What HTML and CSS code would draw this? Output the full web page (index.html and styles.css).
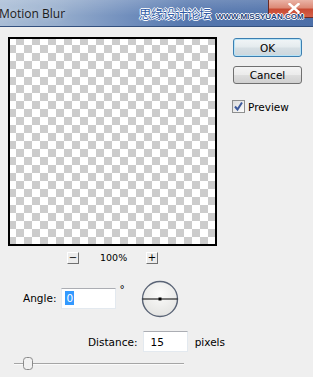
FILE: index.html
```html
<!DOCTYPE html>
<html>
<head>
<meta charset="utf-8">
<link rel="stylesheet" href="styles.css">
</head>
<body>
<div class="window">
  <div class="titlebar">
    <span class="title">Motion Blur</span>
    <span class="close">
      <svg width="12" height="10" viewBox="0 0 12 10"><path d="M1.5 1 L10.5 9 M10.5 1 L1.5 9" stroke="#fff" stroke-width="2.4" stroke-linecap="square"/></svg>
    </span>
    <span class="wm-cn">思缘设计论坛</span>
    <span class="wm-en">WWW.MISSYUAN.COM</span>
  </div>
  <div class="main">
    <div class="left">
      <div class="preview"><div class="checker"></div></div>
      <div class="zoomrow">
        <span class="zbtn">−</span>
        <span class="zpct">100%</span>
        <span class="zbtn">+</span>
      </div>
      <div class="angle-row">
        <span class="lbl">Angle:</span>
        <span class="field angle-field"><span class="sel">0</span></span>
        <span class="deg">°</span>
        <svg class="dial" width="38" height="38" viewBox="0 0 38 38">
          <defs>
            <radialGradient id="dg" cx="50%" cy="35%" r="65%">
              <stop offset="0" stop-color="#fbfbfa"/>
              <stop offset="1" stop-color="#e4e4e2"/>
            </radialGradient>
          </defs>
          <circle cx="19" cy="19" r="17.5" fill="url(#dg)" stroke="#5a6476" stroke-width="1.4"/>
          <line x1="1.5" y1="19" x2="36.5" y2="19" stroke="#000" stroke-width="1.2"/>
          <rect x="17.5" y="17.5" width="3" height="3" fill="#000"/>
        </svg>
      </div>
      <div class="dist-row">
        <span class="lbl">Distance:</span>
        <span class="field dist-field">15</span>
        <span class="unit">pixels</span>
      </div>
      <div class="slider">
        <div class="track"></div>
        <svg class="thumb" width="10" height="13" viewBox="0 0 10 13"><rect x="0.5" y="0.5" width="9" height="12" rx="3" fill="#f1f1f1" stroke="#8a8a8a"/></svg>
      </div>
    </div>
    <div class="right">
      <button class="btn ok">OK</button>
      <button class="btn cancel">Cancel</button>
      <label class="chk">
        <span class="box"><svg width="11" height="11" viewBox="0 0 11 11"><path d="M2 5.5 L4.5 8.5 L9 1.5" fill="none" stroke="#3d5a9c" stroke-width="2"/></svg></span>
        <span class="chk-text">Preview</span>
      </label>
    </div>
  </div>
</div>
</body>
</html>
```
FILE: styles.css
```css
html, body {
  margin: 0;
  padding: 0;
}
body {
  width: 313px;
  height: 377px;
  overflow: hidden;
  background: #efefef;
  font-family: "DejaVu Sans", Tahoma, sans-serif;
  font-size: 10.5px;
  color: #000;
}
.window {
  width: 313px;
  height: 377px;
  display: flex;
  flex-direction: column;
}
.titlebar {
  position: relative;
  height: 26px;
  flex: none;
  display: flex;
  align-items: center;
  background:
    linear-gradient(180deg, rgba(255,255,255,0.18) 0%, rgba(255,255,255,0) 60%),
    linear-gradient(90deg, #a9bdd6 0%, #97aecd 18%, #6f8dbc 42%, #5577ae 60%, #4d6fa8 100%);
  border-bottom: 1px solid #33507e;
}
.title {
  font-family: "Open Sans", "Noto Sans", sans-serif;
  font-size: 12px;
  color: #1b1b1b;
  margin-left: -1px;
  margin-top: 1px;
  text-shadow: 0 0 6px rgba(255,255,255,0.6);
}
.wm-cn {
  position: absolute;
  left: 139px;
  top: 6px;
  font-family: "Noto Sans CJK SC", sans-serif;
  font-size: 12.5px;
  line-height: 16px;
  color: #2f5aa5;
  text-shadow: 1px 0 0 #fff, -1px 0 0 #fff, 0 1px 0 #fff, 0 -1px 0 #fff;
  letter-spacing: -0.5px;
}
.wm-en {
  position: absolute;
  left: 216px;
  top: 12px;
  font-family: "Liberation Sans", sans-serif;
  font-weight: bold;
  font-size: 8px;
  line-height: 9px;
  color: #23427a;
  text-shadow: 1px 0 0 #fff, -1px 0 0 #fff, 0 1px 0 #fff, 0 -1px 0 #fff;
}
.close {
  position: absolute;
  left: 268px;
  top: -1px;
  width: 50px;
  height: 19px;
  border: 1px solid #6a2a24;
  border-radius: 0 0 4px 4px;
  background: linear-gradient(180deg, #eab3a6 0%, #dc8a77 45%, #c94a33 55%, #d4614a 100%);
  display: flex;
  align-items: center;
  padding-left: 19px;
  box-sizing: border-box;
}
.close svg { margin-top: -1px; }
.main {
  display: flex;
  flex: 1;
}
.left {
  width: 225px;
  padding: 10px 0 0 8px;
  box-sizing: border-box;
  display: flex;
  flex-direction: column;
}
.preview {
  width: 209px;
  height: 209px;
  border: 2px solid #000;
  box-sizing: border-box;
  background: #fff;
}
.checker {
  width: 100%;
  height: 100%;
  background-color: #fff;
  background-image:
    linear-gradient(45deg, #cccccc 25%, transparent 25%, transparent 75%, #cccccc 75%),
    linear-gradient(45deg, #cccccc 25%, transparent 25%, transparent 75%, #cccccc 75%);
  background-size: 16px 16px;
  background-position: -2px -2px, 6px 6px;
}
.zoomrow {
  width: 209px;
  display: flex;
  justify-content: center;
  align-items: center;
  gap: 21px;
  margin-top: 6px;
  height: 12px;
}
.zbtn {
  width: 12px;
  height: 12px;
  box-sizing: border-box;
  border-top: 1px solid #fff;
  border-left: 1px solid #fff;
  border-right: 1px solid #707070;
  border-bottom: 1px solid #707070;
  background: #ececec;
  font-size: 10px;
  line-height: 10px;
  text-align: center;
  font-family: "DejaVu Sans", sans-serif;
}
.zpct {
  font-size: 9.5px;
  line-height: 12px;
  width: 25px;
  text-align: center;
}
.angle-row {
  display: flex;
  align-items: center;
  margin-top: 15px;
  padding-left: 15px;
  height: 38px;
}
.lbl { white-space: nowrap; }
.field {
  box-sizing: border-box;
  height: 21px;
  background: #fff;
  border: 1px solid #e3e9ef;
  border-top-color: #abadb3;
  display: flex;
  align-items: center;
  padding-left: 3px;
}
.angle-field {
  width: 55px;
  margin-left: 5px;
}
.sel {
  background: #3399ff;
  color: #fff;
  padding: 0 1px;
  line-height: 14px;
}
.deg {
  margin-left: 3px;
  align-self: flex-start;
  margin-top: 4px;
}
.dial {
  margin-left: 16px;
  margin-top: 1px;
}
.dist-row {
  display: flex;
  align-items: center;
  margin-top: 14px;
  padding-left: 80px;
  height: 21px;
}
.dist-field {
  width: 54px;
  margin-left: 6px;
  padding-left: 6px;
}
.unit { margin-left: 7px; }
.slider {
  position: relative;
  height: 14px;
  margin-top: 5px;
  width: 180px;
}
.track {
  position: absolute;
  left: 6px;
  top: 6px;
  width: 170px;
  height: 1px;
  background: #a5a5a5;
  border-bottom: 1px solid #fafafa;
}
.thumb {
  position: absolute;
  left: 15px;
  top: 0;
}
.right {
  padding: 11px 0 0 8px;
  display: flex;
  flex-direction: column;
}
.btn {
  width: 69px;
  height: 19px;
  box-sizing: border-box;
  font-family: "DejaVu Sans", Tahoma, sans-serif;
  font-size: 10.5px;
  color: #000;
  border: 1px solid #707070;
  border-radius: 3px;
  background: linear-gradient(180deg, #f4f4f4 0%, #ebebeb 48%, #dddddd 52%, #d0d0d0 100%);
  padding: 0;
  line-height: 16px;
}
.ok {
  border-color: #3c7fb1;
  box-shadow: inset 0 0 0 1px #b6e3f7;
  background: linear-gradient(180deg, #f1f5f7 0%, #e4ebee 48%, #d6dfe4 52%, #cdd7dd 100%);
}
.cancel {
  margin-top: 9px;
  height: 18px;
}
.chk {
  display: flex;
  align-items: center;
  margin-top: 16px;
  margin-left: -1px;
}
.box {
  width: 13px;
  height: 13px;
  box-sizing: border-box;
  border: 1px solid #8e8f8f;
  background: linear-gradient(135deg, #dcdcdc 0%, #fbfbfb 100%);
  display: flex;
  align-items: center;
  justify-content: center;
}
.chk-text { margin-left: 3px; }
```
